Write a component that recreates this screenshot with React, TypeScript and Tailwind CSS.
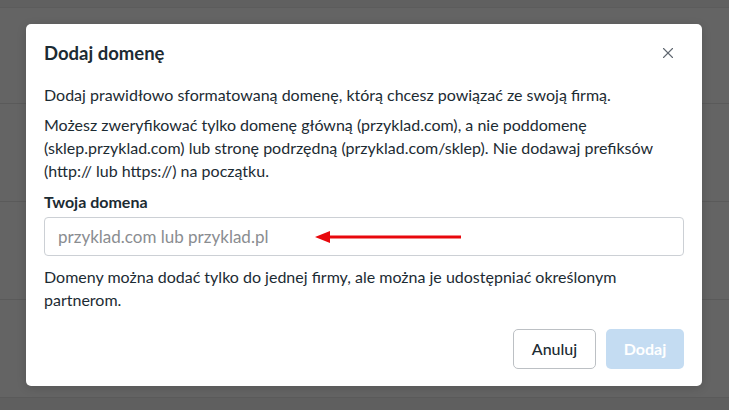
import { X } from "lucide-react";

const font = { fontFamily: "Lato, 'Open Sans', sans-serif" };

const Backdrop = () => (
  <div className="absolute inset-0 flex flex-col bg-[#646464]">
    <div className="h-[8px] border-b border-[#5c5c5c] bg-[#606060]" />
    <div className="h-[96px] border-b border-[#5a5a5a]" />
    <div className="h-[98px] border-b border-[#5a5a5a]" />
    <div className="h-[98px] border-b border-[#5a5a5a]" />
    <div className="h-[98px] border-b border-[#5a5a5a]" />
    <div className="flex-1 bg-[#5f5f5f]" />
  </div>
);

const Arrow = () => (
  <svg width="147" height="14" viewBox="0 0 147 14" className="shrink-0">
    <line x1="10" y1="7" x2="146" y2="7" stroke="#e8080c" strokeWidth="3" />
    <polygon points="0,7 15,1 15,13" fill="#e8080c" />
  </svg>
);

export default function App() {
  return (
    <div className="relative h-[410px] w-[729px] overflow-hidden" style={font}>
      <Backdrop />
      <div className="relative pt-[24px] pl-[26px]">
        <div className="w-[676px] rounded-[5px] bg-white px-[18px] pt-[16px] pb-[17px] text-[#1c2b33] shadow-[0_2px_10px_rgba(0,0,0,0.15)]">
          <div className="flex h-[26px] items-center justify-between">
            <h2 className="text-[18.5px] font-bold leading-[26px]">Dodaj domenę</h2>
            <button className="mr-[6px] flex h-[20px] w-[20px] items-center justify-center text-[#606770]">
              <X size={18} strokeWidth={1.5} />
            </button>
          </div>

          <p className="mt-[17px] text-[16px] leading-[23px]">
            Dodaj prawidłowo sformatowaną domenę, którą chcesz powiązać ze swoją firmą.
          </p>
          <p className="mt-[7px] text-[16px] leading-[23px]">
            Możesz zweryfikować tylko domenę główną (przyklad.com), a nie poddomenę
            (sklep.przyklad.com) lub stronę podrzędną (przyklad.com/sklep). Nie dodawaj prefiksów
            (http:// lub https://) na początku.
          </p>

          <label className="mt-[8px] block text-[16px] font-bold leading-[23px]">Twoja domena</label>
          <div className="mt-[4px] flex h-[39px] items-center rounded-[4px] border border-[#ccd0d5] pl-[13px]">
            <span className="text-[17px] text-[#8a8d91]">przyklad.com lub przyklad.pl</span>
            <div className="ml-[47px] flex items-center">
              <Arrow />
            </div>
          </div>

          <p className="mt-[9px] w-[600px] text-[16px] leading-[23px]">
            Domeny można dodać tylko do jednej firmy, ale można je udostępniać określonym partnerom.
          </p>

          <div className="mt-[18px] flex justify-end gap-[10px]">
            <button className="h-[40px] w-[83px] rounded-[5px] border border-[#bcc0c4] bg-white text-[16px] font-medium text-[#1c2b33]">
              Anuluj
            </button>
            <button className="h-[40px] w-[78px] rounded-[5px] bg-[#c4dcf2] text-[16px] font-bold text-white">
              Dodaj
            </button>
          </div>
        </div>
      </div>
    </div>
  );
}
